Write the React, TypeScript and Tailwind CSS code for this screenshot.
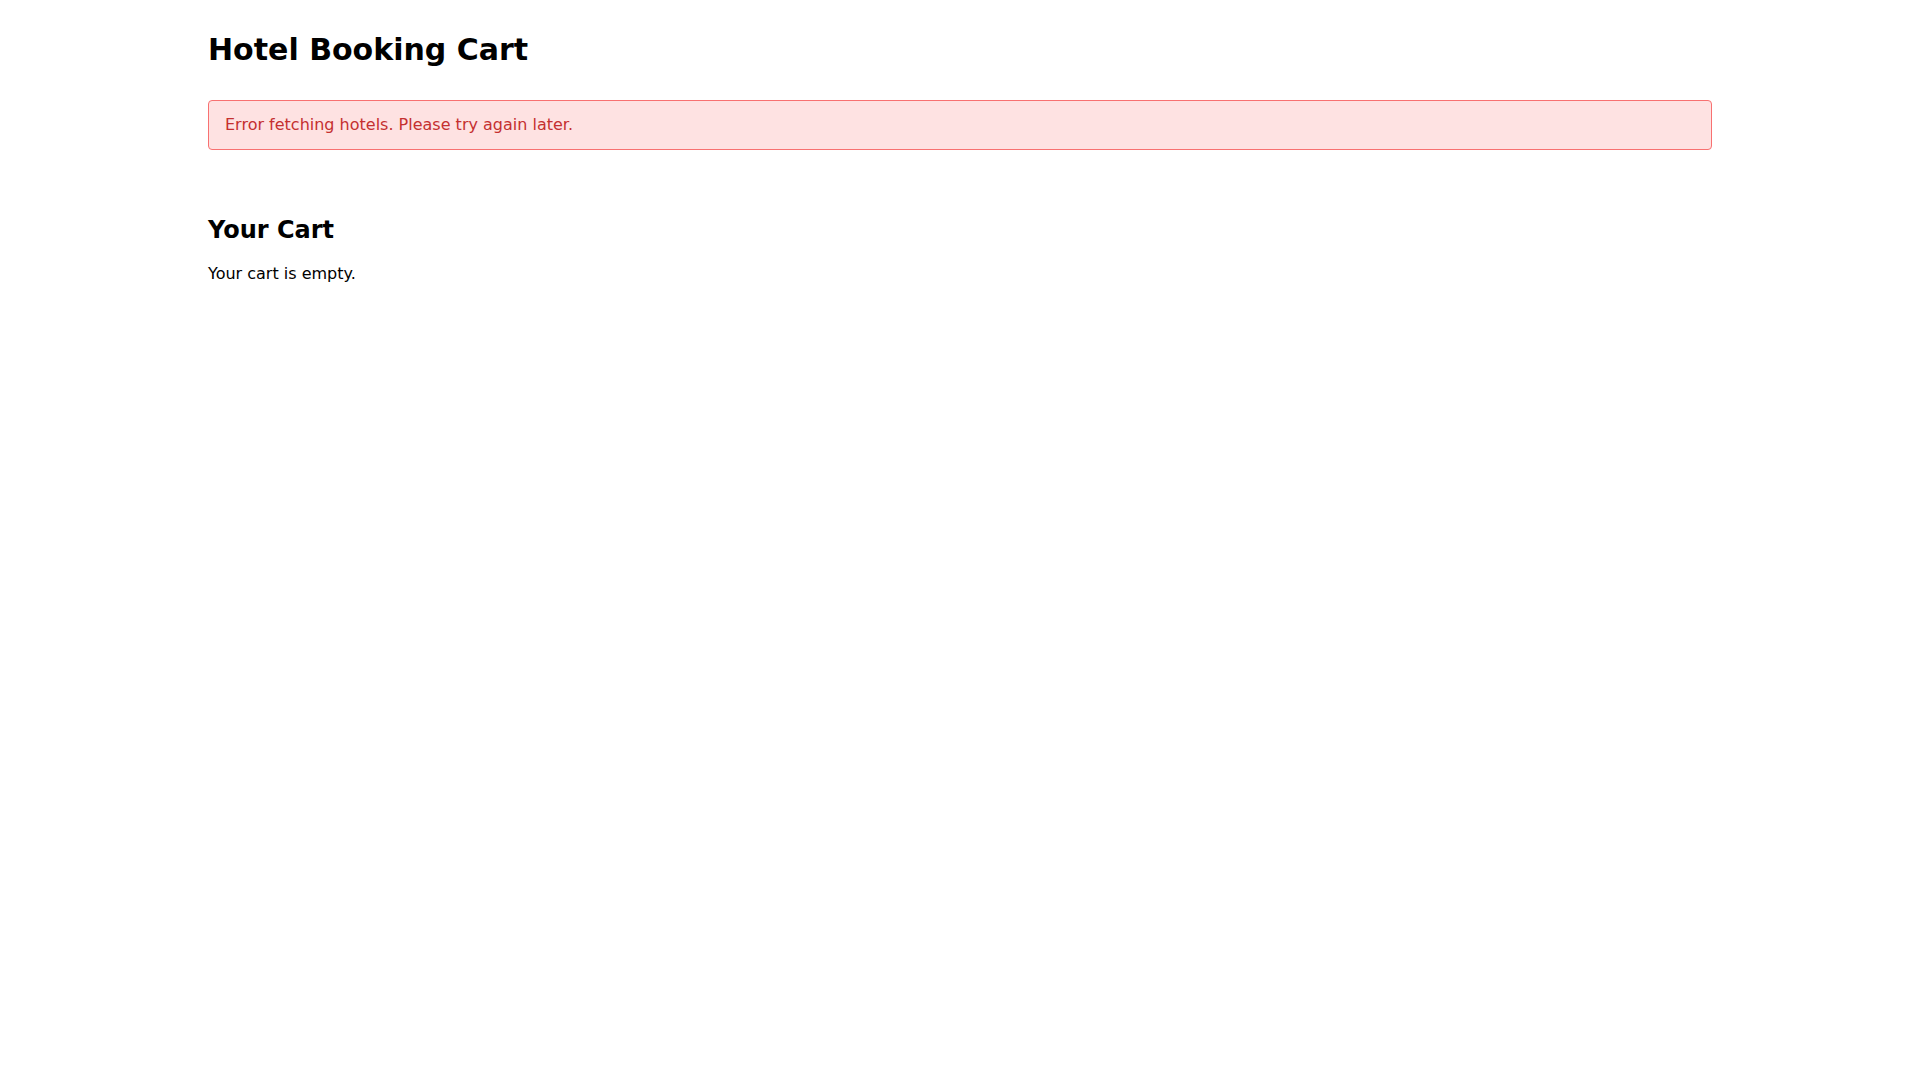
export default function App() {
  return (
    <div className="min-h-screen bg-white font-['DejaVu_Sans',sans-serif] text-black">
      <div className="container mx-auto px-4 py-8">
        <h1 className="mb-8 text-3xl font-bold">Hotel Booking Cart</h1>
        <div className="rounded border border-[#f87171] bg-[#fee2e2] px-4 py-3 text-[#c53030]">
          Error fetching hotels. Please try again later.
        </div>
        <div className="mt-16">
          <h2 className="mb-4 text-2xl font-bold">Your Cart</h2>
          <p>Your cart is empty.</p>
        </div>
      </div>
    </div>
  )
}
